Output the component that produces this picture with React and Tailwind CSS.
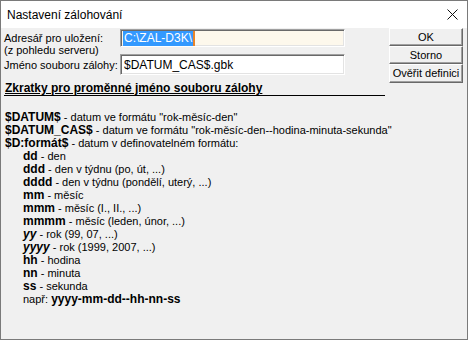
import React from "react";

const tokens = [
  { b: "$DATUM$", t: " - datum ve formátu \"rok-měsíc-den\"" },
  { b: "$DATUM_CAS$", t: " - datum ve formátu \"rok-měsíc-den--hodina-minuta-sekunda\"" },
  { b: "$D:formát$", t: " - datum v definovatelném formátu:" },
];

const formats = [
  { b: "dd", t: " - den" },
  { b: "ddd", t: " - den v týdnu (po, út, ...)" },
  { b: "dddd", t: " - den v týdnu (pondělí, uterý, ...)" },
  { b: "mm", t: " - měsíc" },
  { b: "mmm", t: " - měsíc (I., II., ...)" },
  { b: "mmmm", t: " - měsíc (leden, únor, ...)" },
  { b: "yy", t: " - rok (99, 07, ...)", i: true },
  { b: "yyyy", t: " - rok (1999, 2007, ...)", i: true },
  { b: "hh", t: " - hodina" },
  { b: "nn", t: " - minuta" },
  { b: "ss", t: " - sekunda" },
];

function Button({ children, tall }) {
  return (
    <button
      className={
        "w-full bg-[#f0f0f0] border border-t-white border-l-white border-b-[#696969] border-r-[#696969] shadow-[inset_-1px_-1px_0_#a0a0a0] text-[11px] leading-none text-black " +
        (tall ? "h-[19px]" : "h-[18px]")
      }
    >
      {children}
    </button>
  );
}

export default function App() {
  return (
    <div className="w-[468px] h-[340px] border border-[#7a7a7a] bg-[#f0f0f0] flex flex-col font-['Liberation_Sans',Arial,sans-serif] text-[11px] text-black overflow-hidden">
      {/* Title bar */}
      <div className="h-[27px] bg-white flex items-center justify-between pl-[6px] pr-[9px] shrink-0">
        <span className="text-[12px]">Nastavení zálohování</span>
        <svg width="11" height="11" viewBox="0 0 11 11">
          <path d="M0.5 0.5 L10.5 10.5 M10.5 0.5 L0.5 10.5" stroke="#111" strokeWidth="1" />
        </svg>
      </div>

      <div className="flex">
        {/* Left side */}
        <div className="w-[384px] pl-[3px]">
          <div className="flex">
            <div className="w-[116px] pt-[4px] leading-[12px]">
              <div>Adresář pro uložení:</div>
              <div>(z pohledu serveru)</div>
              <div className="mt-[3px]">Jméno souboru zálohy:</div>
            </div>
            <div className="w-[225px] pt-[1px]">
              <div className="h-[18px] bg-[#fdf8ec] border border-t-[#a0a0a0] border-l-[#a0a0a0] border-b-white border-r-white shadow-[inset_1px_1px_0_#696969,inset_-1px_-1px_0_#e3e3e3] flex items-center pl-[2px]">
                <span className="bg-[#3399ff] text-white text-[12px] leading-[15px] px-[1px]">C:\ZAL-D3K\</span>
                <span className="w-[2px] h-[15px] bg-[#e8842a]" />
              </div>
              <div className="mt-[7px] h-[21px] bg-white border border-t-[#a0a0a0] border-l-[#a0a0a0] border-b-white border-r-white shadow-[inset_1px_1px_0_#696969,inset_-1px_-1px_0_#e3e3e3] flex items-center pl-[3px] text-[12px]">
                $DATUM_CAS$.gbk
              </div>
            </div>
          </div>

          <div className="mt-[6px] w-[381px] border-b border-black font-bold text-[12px] leading-[14px] pl-[1px] underline">
            Zkratky pro proměnné jméno souboru zálohy
          </div>

          <div className="mt-[15px] leading-[13px] pl-[1px]">
            {tokens.map((r) => (
              <div key={r.b} className="whitespace-nowrap">
                <span className="font-bold text-[12px]">{r.b}</span>
                <span>{r.t}</span>
              </div>
            ))}
            <div className="pl-[18px]">
              {formats.map((r) => (
                <div key={r.b} className="whitespace-nowrap">
                  <span className={"font-bold text-[12px]" + (r.i ? " italic" : "")}>{r.b}</span>
                  <span>{r.t}</span>
                </div>
              ))}
              <div className="whitespace-nowrap">
                <span>např: </span>
                <span className="font-bold text-[12px]">yyyy-mm-dd--hh-nn-ss</span>
              </div>
            </div>
          </div>
        </div>

        {/* Buttons */}
        <div className="w-[74px] ml-[4px] flex flex-col">
          <Button>OK</Button>
          <Button>Storno</Button>
          <Button tall>Ověřit definici</Button>
        </div>
      </div>
    </div>
  );
}
